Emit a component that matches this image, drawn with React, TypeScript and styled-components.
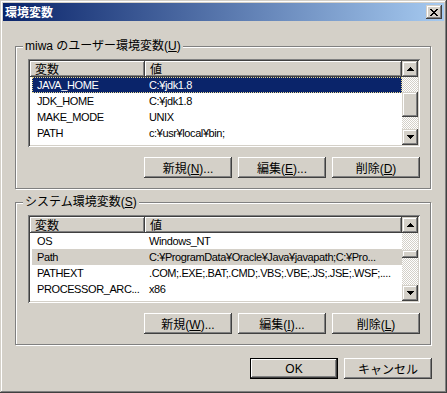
import React from "react";
import styled, { createGlobalStyle, css } from "styled-components";

type Row = { name: string; value: string; state?: "active" | "inactive" };

const userVars: Row[] = [
  { name: "JAVA_HOME", value: "C:¥jdk1.8", state: "active" },
  { name: "JDK_HOME", value: "C:¥jdk1.8" },
  { name: "MAKE_MODE", value: "UNIX" },
  { name: "PATH", value: "c:¥usr¥local¥bin;" },
];

const systemVars: Row[] = [
  { name: "OS", value: "Windows_NT" },
  { name: "Path", value: "C:¥ProgramData¥Oracle¥Java¥javapath;C:¥Pro...", state: "inactive" },
  { name: "PATHEXT", value: ".COM;.EXE;.BAT;.CMD;.VBS;.VBE;.JS;.JSE;.WSF;...." },
  { name: "PROCESSOR_ARC...", value: "x86" },
];

const Arrow = ({ down }: { down?: boolean }) => (
  <svg width="7" height="4" viewBox="0 0 7 4" shapeRendering="crispEdges">
    <path
      d={down ? "M0 0h7v1H0z M1 1h5v1H1z M2 2h3v1H2z M3 3h1v1H3z" : "M3 0h1v1H3z M2 1h3v1H2z M1 2h5v1H1z M0 3h7v1H0z"}
      fill="#000"
    />
  </svg>
);

const CloseGlyph = () => (
  <svg width="8" height="7" viewBox="0 0 8 7" shapeRendering="crispEdges">
    <path
      d="M0 0h2v1H0z M6 0h2v1H6z M1 1h2v1H1z M5 1h2v1H5z M2 2h4v1H2z M3 3h2v1H3z M2 4h4v1H2z M1 5h2v1H1z M5 5h2v1H5z M0 6h2v1H0z M6 6h2v1H6z"
      fill="#000"
    />
  </svg>
);

const VarList = ({ rows, thumbTop, thumbSize }: { rows: Row[]; thumbTop: number; thumbSize: number }) => (
  <ListBox>
    <ListMain>
      <Header>
        <HeaderCell $width={115}>変数</HeaderCell>
        <HeaderCell>値</HeaderCell>
      </Header>
      {rows.map((r) => (
        <ListRow key={r.name} $state={r.state}>
          <NameCell>{r.name}</NameCell>
          <ValueCell>{r.value}</ValueCell>
        </ListRow>
      ))}
    </ListMain>
    <ScrollBar>
      <ScrollButton>
        <Arrow />
      </ScrollButton>
      <Track>
        <Thumb $top={thumbTop} $size={thumbSize} />
      </Track>
      <ScrollButton>
        <Arrow down />
      </ScrollButton>
    </ScrollBar>
  </ListBox>
);

const App = () => {
  return (
    <>
      <GlobalStyle />
      <Window>
        <TitleBar>
          <span>環境変数</span>
          <CloseButton>
            <CloseGlyph />
          </CloseButton>
        </TitleBar>

        <Client>
          <GroupBox>
            <Caption>
              miwa のユーザー環境変数(<U>U</U>)
            </Caption>
            <VarList rows={userVars} thumbTop={15} thumbSize={25} />
            <ButtonRow>
              <Button>
                新規(<U>N</U>)...
              </Button>
              <Button>
                編集(<U>E</U>)...
              </Button>
              <Button>
                削除(<U>D</U>)
              </Button>
            </ButtonRow>
          </GroupBox>

          <GroupBox>
            <Caption>
              システム環境変数(<U>S</U>)
            </Caption>
            <VarList rows={systemVars} thumbTop={17} thumbSize={8} />
            <ButtonRow>
              <Button>
                新規(<U>W</U>)...
              </Button>
              <Button>
                編集(<U>I</U>)...
              </Button>
              <Button>
                削除(<U>L</U>)
              </Button>
            </ButtonRow>
          </GroupBox>

          <Footer>
            <Button $default>OK</Button>
            <Button>キャンセル</Button>
          </Footer>
        </Client>
      </Window>
    </>
  );
};

const raised = css`
  box-shadow: inset -1px -1px #404040, inset 1px 1px #fff, inset -2px -2px #808080,
    inset 2px 2px #d4d0c8;
`;

const raisedScroll = css`
  box-shadow: inset -1px -1px #404040, inset 1px 1px #d4d0c8, inset -2px -2px #808080,
    inset 2px 2px #fff;
`;

const GlobalStyle = createGlobalStyle`
  body {
    margin: 0;
    background: #d4d0c8;
  }
`;

const Window = styled.div`
  width: 447px;
  height: 393px;
  box-sizing: border-box;
  padding: 3px;
  display: flex;
  flex-direction: column;
  background: #d4d0c8;
  ${raisedScroll}
  font-family: "Liberation Sans", "Noto Sans CJK JP", sans-serif;
  font-size: 12px;
  color: #000;
`;

const TitleBar = styled.div`
  height: 18px;
  display: flex;
  align-items: center;
  justify-content: space-between;
  padding: 0 2px 0 2px;
  background: linear-gradient(to right, #0a246a, #a6caf0);
  color: #fff;
  font-family: "Noto Sans CJK JP", sans-serif;
  font-weight: bold;
  font-size: 12px;
  line-height: 18px;
`;

const CloseButton = styled.div`
  width: 16px;
  height: 14px;
  display: flex;
  align-items: center;
  justify-content: center;
  background: #d4d0c8;
  ${raisedScroll}
`;

const Client = styled.div`
  flex: 1;
  display: flex;
  flex-direction: column;
  padding: 25px 12px 0 12px;
`;

const GroupBox = styled.div`
  display: flex;
  flex-direction: column;
  margin-right: 1px;
  padding: 0 10px 10px 12px;
  border: 1px solid #808080;
  box-shadow: inset 1px 1px #fff, 1px 1px #fff;

  & + & {
    margin-top: 13px;
  }
`;

const Caption = styled.div`
  align-self: flex-start;
  margin: -8px 0 0 -5px;
  padding: 0 2px;
  height: 14px;
  line-height: 14px;
  background: #d4d0c8;
  white-space: nowrap;
`;

const U = styled.span`
  text-decoration: underline;
`;

const ListBox = styled.div`
  margin-top: 6px;
  height: 88px;
  box-sizing: border-box;
  padding: 2px;
  display: flex;
  background: #fff;
  box-shadow: inset 1px 1px #808080, inset -1px -1px #fff, inset 2px 2px #404040,
    inset -2px -2px #d4d0c8;
`;

const ListMain = styled.div`
  flex: 1;
  min-width: 0;
  display: flex;
  flex-direction: column;
  overflow: hidden;
`;

const Header = styled.div`
  display: flex;
  height: 16px;
  flex-shrink: 0;
`;

const HeaderCell = styled.div<{ $width?: number }>`
  box-sizing: border-box;
  ${(p) => (p.$width ? `width: ${p.$width}px;` : "flex: 1;")}
  padding-left: 5px;
  line-height: 16px;
  background: #d4d0c8;
  box-shadow: inset -1px -1px #404040, inset 1px 1px #fff, inset -2px -2px #808080;
  font-family: "Noto Sans CJK JP", sans-serif;
  white-space: nowrap;
`;

const ListRow = styled.div<{ $state?: "active" | "inactive" }>`
  display: flex;
  height: 16px;
  flex-shrink: 0;
  margin-left: 2px;
  line-height: 16px;
  font-size: 11px;
  letter-spacing: -0.4px;
  ${(p) =>
    p.$state === "active" &&
    css`
      background: #0a246a;
      color: #fff;
      outline: 1px dotted #e8d890;
      outline-offset: -1px;
    `}
  ${(p) =>
    p.$state === "inactive" &&
    css`
      background: #d4d0c8;
    `}
`;

const NameCell = styled.div`
  box-sizing: border-box;
  width: 113px;
  flex-shrink: 0;
  padding-left: 5px;
  overflow: hidden;
  white-space: nowrap;
  text-overflow: ellipsis;
`;

const ValueCell = styled.div`
  flex: 1;
  min-width: 0;
  padding-left: 4px;
  overflow: hidden;
  white-space: nowrap;
  text-overflow: ellipsis;
`;

const ScrollBar = styled.div`
  width: 16px;
  flex-shrink: 0;
  display: flex;
  flex-direction: column;
`;

const ScrollButton = styled.div`
  width: 16px;
  height: 16px;
  flex-shrink: 0;
  display: flex;
  align-items: center;
  justify-content: center;
  background: #d4d0c8;
  ${raisedScroll}
`;

const Track = styled.div`
  flex: 1;
  display: flex;
  flex-direction: column;
  background-color: #fff;
  background-image: repeating-conic-gradient(#d4d0c8 0 25%, #fff 0 50%);
  background-size: 2px 2px;
`;

const Thumb = styled.div<{ $top: number; $size: number }>`
  margin-top: ${(p) => p.$top}px;
  height: ${(p) => p.$size}px;
  background: #d4d0c8;
  ${raisedScroll}
`;

const ButtonRow = styled.div`
  margin-top: 10px;
  display: flex;
  justify-content: flex-end;
  gap: 6px;
`;

const Footer = styled.div`
  margin-top: 13px;
  display: flex;
  justify-content: flex-end;
  gap: 6px;
`;

const Button = styled.button<{ $default?: boolean }>`
  width: 88px;
  height: 21px;
  box-sizing: border-box;
  padding: 0;
  border: ${(p) => (p.$default ? "1px solid #000" : "none")};
  background: #d4d0c8;
  ${raised}
  font-family: "Liberation Sans", "Noto Sans CJK JP", sans-serif;
  font-size: 12px;
  color: #000;
  white-space: nowrap;
`;

export default App;
